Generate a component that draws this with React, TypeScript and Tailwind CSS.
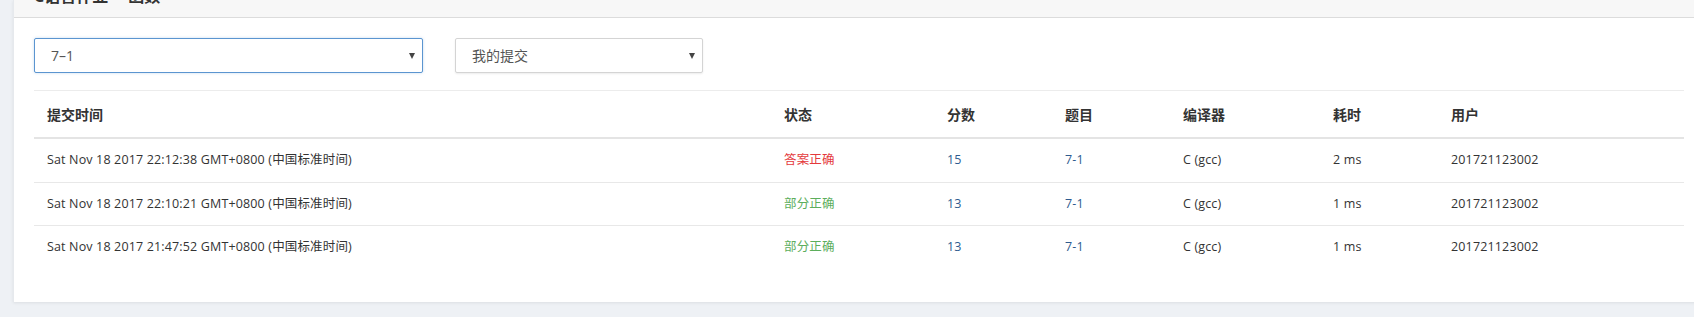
const rows = [
  { time: 'Sat Nov 18 2017 22:12:38 GMT+0800 (中国标准时间)', status: '答案正确', ok: true, score: '15', problem: '7-1', compiler: 'C (gcc)', cost: '2 ms', user: '201721123002' },
  { time: 'Sat Nov 18 2017 22:10:21 GMT+0800 (中国标准时间)', status: '部分正确', ok: false, score: '13', problem: '7-1', compiler: 'C (gcc)', cost: '1 ms', user: '201721123002' },
  { time: 'Sat Nov 18 2017 21:47:52 GMT+0800 (中国标准时间)', status: '部分正确', ok: false, score: '13', problem: '7-1', compiler: 'C (gcc)', cost: '1 ms', user: '201721123002' },
];

const headers = ['提交时间', '状态', '分数', '题目', '编译器', '耗时', '用户'];

const cols = 'grid grid-cols-[737px_163px_118px_118px_150px_118px_1fr]';

function Select({ value, width, focused }: { value: string; width: string; focused?: boolean }) {
  return (
    <div
      className={`${width} h-[35px] flex items-center justify-between pl-[16px] pr-[7px] bg-white rounded-[2px] border text-[14px] text-[#555] ${
        focused ? 'border-[#5b95d0] shadow-[0_0_3px_rgba(91,149,208,0.35)]' : 'border-[#d4d4d4] shadow-[0_1px_2px_rgba(0,0,0,0.08)]'
      }`}
    >
      <span>{value}</span>
      {/* small caret */}
      <span className="w-0 h-0 border-l-[3px] border-r-[3px] border-t-[6px] border-l-transparent border-r-transparent border-t-[#444]" />
    </div>
  );
}

export default function App() {
  return (
    <div
      className="w-[1694px] h-[317px] overflow-hidden bg-[#eef1f5] pl-[13px]"
      style={{ fontFamily: '"Open Sans", "Noto Sans CJK SC", sans-serif' }}
    >
      <div className="w-[1690px] h-[302px] bg-white shadow-[0_1px_3px_rgba(0,0,0,0.08)] border-l border-[#e6e9ed]">
        {/* panel heading, clipped at the top of the window */}
        <div className="h-[18px] overflow-hidden bg-[#f7f7f7] border-b border-[#dcdcdc] pl-[20px]">
          <div className="mt-[-14px] text-[16px] leading-[20px] font-bold text-[#333]">C语言作业一 函数</div>
        </div>

        <div className="px-[20px] pt-[20px]">
          <div className="flex gap-[32px]">
            <Select value="7–1" width="w-[389px]" focused />
            <Select value="我的提交" width="w-[248px]" />
          </div>

          <div className="mt-[17px] w-[1650px] border-t border-[#ececec] text-[#333]">
            <div className={`${cols} h-[48px] items-center border-b-2 border-[#e4e4e4] text-[14px] font-bold`}>
              {headers.map((h) => (
                <div key={h} className="pl-[13px]">{h}</div>
              ))}
            </div>
            {rows.map((r, i) => (
              <div
                key={i}
                className={`${cols} h-[43px] items-center text-[12.5px] tracking-[0.15px] ${i > 0 ? 'border-t border-[#e8e8e8]' : ''}`}
              >
                <div className="pl-[13px]">{r.time}</div>
                <div className={`pl-[13px] ${r.ok ? 'text-[#e4393c]' : 'text-[#5cae5c]'}`}>{r.status}</div>
                <div className="pl-[13px] text-[#2f5b8f]">{r.score}</div>
                <div className="pl-[13px] text-[#2f5b8f]">{r.problem}</div>
                <div className="pl-[13px]">{r.compiler}</div>
                <div className="pl-[13px]">{r.cost}</div>
                <div className="pl-[13px]">{r.user}</div>
              </div>
            ))}
          </div>
        </div>
      </div>
    </div>
  );
}
